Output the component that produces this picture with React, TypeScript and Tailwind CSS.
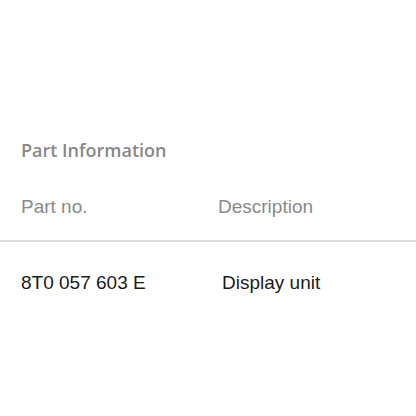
export default function App() {
  return (
    <div className="w-[416px] h-[416px] bg-white overflow-hidden">
      <div className="pt-[141px]">
        <h2 className="px-[21px] text-[18px] leading-none font-semibold text-[#888888] [font-family:'Open_Sans',sans-serif]">
          Part Information
        </h2>
        <div className="mt-[38px] flex px-[21px] text-[19px] leading-none text-[#8a8a8a] [font-family:'Liberation_Sans',Arial,sans-serif]">
          <div className="w-[197px]">Part no.</div>
          <div>Description</div>
        </div>
        <div className="mt-[24px] h-[2px] bg-[#dcdcdc]" />
        <div className="mt-[31px] flex px-[21px] text-[19px] leading-none text-[#1a1a1a] [font-family:'Liberation_Sans',Arial,sans-serif]">
          <div className="w-[201px]">8T0 057 603 E</div>
          <div>Display unit</div>
        </div>
      </div>
    </div>
  );
}
